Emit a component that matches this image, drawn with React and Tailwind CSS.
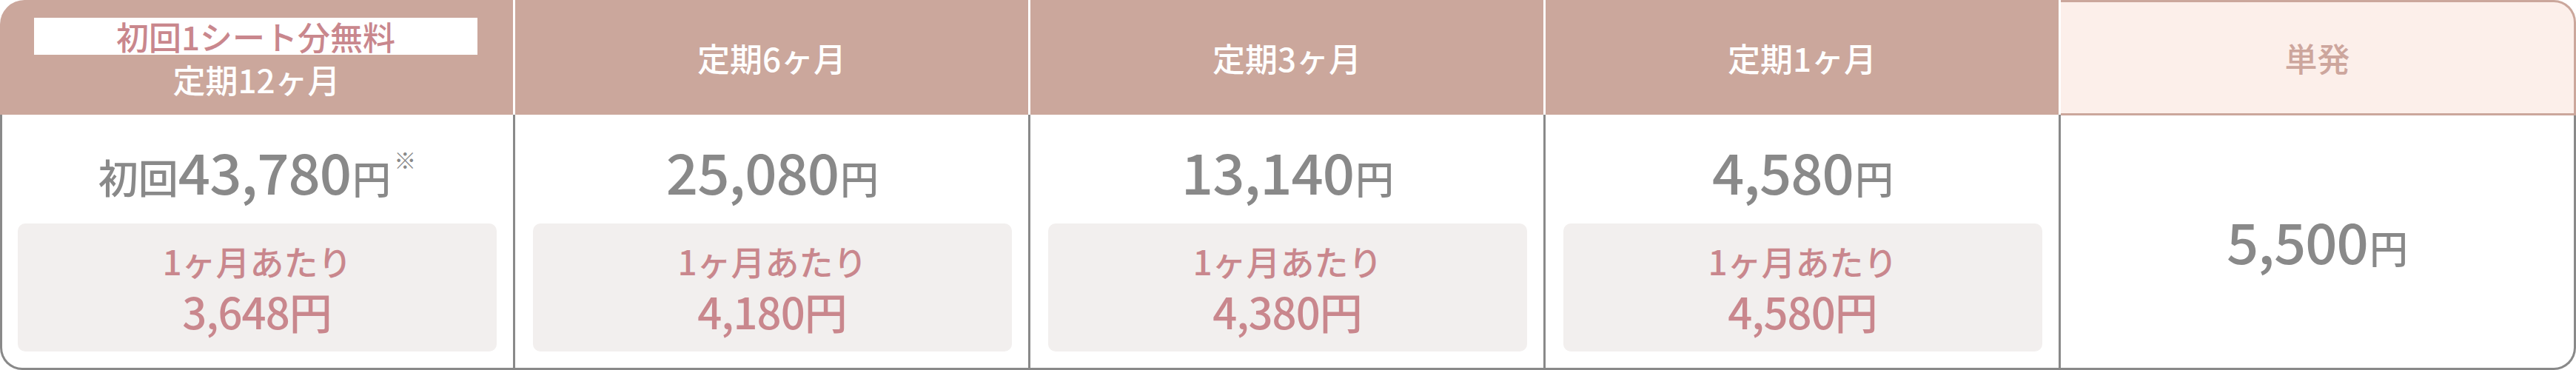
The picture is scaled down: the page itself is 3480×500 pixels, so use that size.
const plans = [
  { label: "定期12ヶ月", badge: "初回1シート分無料", prefix: "初回", price: "43,780", note: true, monthly: "3,648" },
  { label: "定期6ヶ月", price: "25,080", monthly: "4,180" },
  { label: "定期3ヶ月", price: "13,140", monthly: "4,380" },
  { label: "定期1ヶ月", price: "4,580", monthly: "4,580" },
];

const font = { fontFamily: '"Noto Sans CJK JP", "Noto Sans", sans-serif' };

function Price({ prefix, price, note }) {
  return (
    <div className="flex items-end justify-center h-[76px] text-[#898989] font-medium">
      {prefix && <span className="text-[54px] leading-none mb-[2px]">{prefix}</span>}
      <span className="text-[76px] leading-none tracking-[-1px]">{price}</span>
      <span className="text-[52px] leading-none mb-[2px] ml-[2px]">円</span>
      {note && <span className="self-start text-[30px] leading-none mt-[8px] ml-[4px] font-normal">※</span>}
    </div>
  );
}

function PlanColumn({ plan, first }) {
  return (
    <div className="flex flex-col w-[696px]">
      <div
        className={`h-[155px] bg-[#cba79c] border-r-[3px] border-white flex flex-col items-center justify-center gap-[8px] font-medium ${
          first ? "rounded-tl-[33px]" : ""
        }`}
      >
        {plan.badge && (
          <div className="w-[599px] h-[50px] bg-white flex items-center justify-center text-[44px] leading-none text-[#c9878d] -translate-x-[1px]">
            {plan.badge}
          </div>
        )}
        <div className="text-[44px] leading-[50px] text-white">{plan.label}</div>
      </div>
      <div
        className={`flex-1 bg-white border-r-[3px] border-b-[3px] border-[#898989] pt-[37px] ${
          first ? "border-l-[3px] rounded-bl-[30px] pl-[21px] pr-[22px]" : "pl-[24px] pr-[22px]"
        }`}
      >
        <Price prefix={plan.prefix} price={plan.price} note={plan.note} />
        <div className="mt-[34px] h-[173px] rounded-[10px] bg-[#f2efee] flex flex-col items-center justify-center text-[#c9878d] font-medium pt-[2px]">
          <div className="text-[46px] leading-[60px]">1ヶ月あたり</div>
          <div className="text-[58px] leading-[76px]">
            <span className="tracking-[-1px]">{plan.monthly}</span>円
          </div>
        </div>
      </div>
    </div>
  );
}

export default function App() {
  return (
    <div className="w-[3480px] h-[500px] bg-white flex" style={font}>
      {plans.map((p, i) => (
        <PlanColumn key={p.label} plan={p} first={i === 0} />
      ))}
      <div className="flex flex-col flex-1">
        <div className="h-[156px] bg-[#fcefea] border-t-[3px] border-r-[3px] border-b-[3px] border-[#cba79c] rounded-tr-[30px] flex items-center justify-center">
          <span className="text-[44px] leading-none text-[#cda69d] font-medium">単発</span>
        </div>
        <div className="flex-1 bg-white border-r-[3px] border-b-[3px] border-[#898989] rounded-br-[30px] flex items-center justify-center pb-[6px]">
          <Price price="5,500" />
        </div>
      </div>
    </div>
  );
}
